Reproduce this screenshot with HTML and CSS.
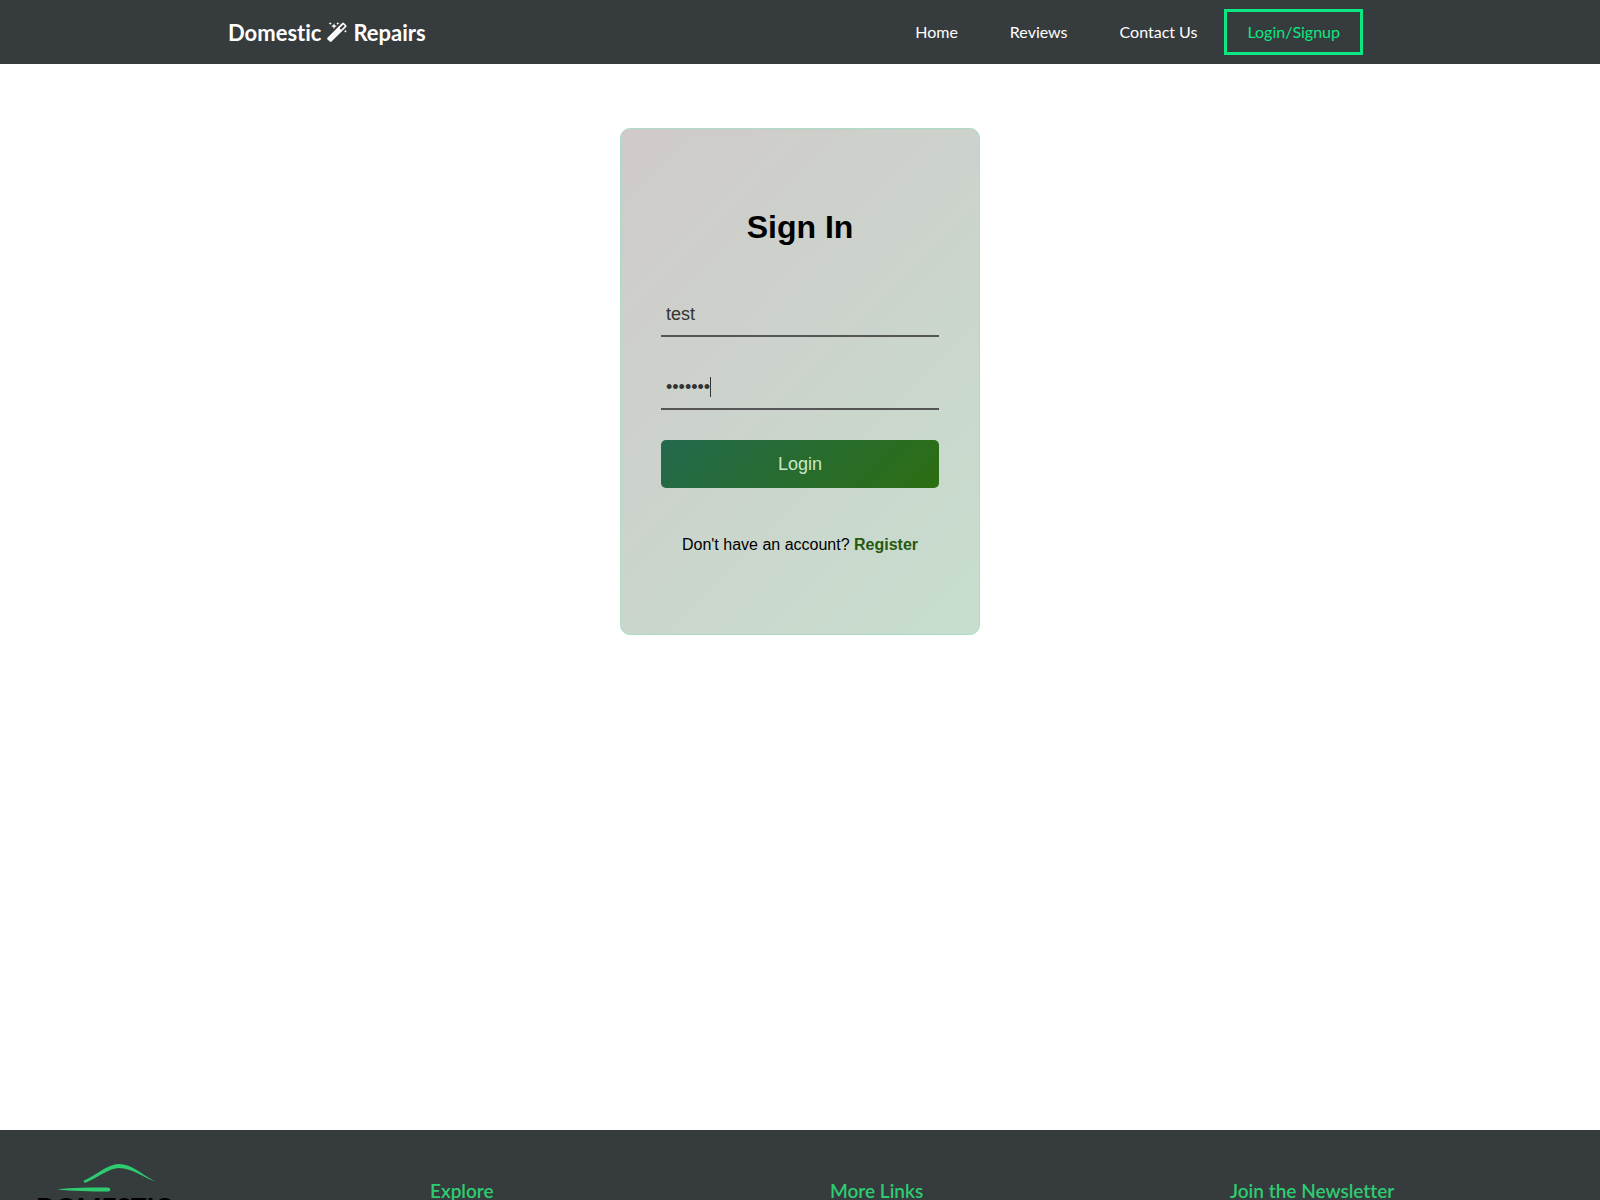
FILE: index.html
```html
<!DOCTYPE html>
<html lang="en">
<head>
<meta charset="utf-8">
<meta name="viewport" content="width=device-width, initial-scale=1">
<title>Domestic Repairs - Sign In</title>
<link rel="stylesheet" href="styles.css">
</head>
<body>
<header class="header">
  <div class="header-inner">
    <a class="brand" href="#">
      <span>Domestic</span>
      <svg class="wand" viewBox="0 0 20 20" aria-hidden="true">
        <path fill="currentColor" fill-rule="evenodd" d="M.5 15.700 15.200 1Q16.100.1 17 1L19.200 3.200Q20 4.100 19.200 5L4.500 19.600Q3.600 20.400 2.800 19.600L.5 17.400Q-.3 16.500.5 15.700ZM12.500 6.200 14.100 7.800 17.800 4 16.300 2.500Z"/>
        <path fill="currentColor" d="m7 1.200.8 2.100 2.100.8-2.100.8L7 7l-.8-2.100-2.100-.8 2.100-.8ZM3.200 0l.5 1 1 .5-1 .5-.5 1-.5-1-1-.5 1-.5ZM10.800 0l.5 1 1 .5-1 .5-.5 1-.5-1-1-.5 1-.5ZM18.400 7.800l.5 1 1 .5-1 .5-.5 1-.5-1-1-.5 1-.5Z"/>
      </svg>
      <span>Repairs</span>
    </a>
    <nav class="nav">
      <a class="nav-link" href="#">Home</a>
      <a class="nav-link" href="#">Reviews</a>
      <a class="nav-link" href="#">Contact Us</a>
      <a class="nav-login" href="#">Login/Signup</a>
    </nav>
  </div>
</header>
<main class="main">
  <form class="card">
    <h1 class="title">Sign In</h1>
    <div class="field">
      <input class="input" type="text" aria-label="Username" value="test">
    </div>
    <div class="field">
      <input class="input" type="password" aria-label="Password" value="test123">
      <span class="caret"></span>
    </div>
    <button class="submit" type="button">Login</button>
    <p class="register">Don't have an account? <a class="register-link" href="#">Register</a></p>
  </form>
</main>
<footer class="footer">
  <div class="footer-logo">
    <svg class="logo" viewBox="0 0 160 80" role="img" aria-label="Domestic Repairs">
      <path fill="#2ecc71" d="M54 16.500C68 10 78 0 89 0 101 0 110 9 125 17.500 113 13 101 4 89 4 79 4 69 13 56 18.500 54 19 53 17.500 54 16.500Z"/>
      <path fill="#2ecc71" d="M27 25.500C42 23.500 61 23.500 78 23.500 81 23.500 81 27.500 78 27.500 61 27.500 42 27 27 25.500Z"/>
      <text class="logo-text" x="6" y="53">DOMESTIC</text>
    </svg>
  </div>
  <div class="footer-col"><h2 class="footer-title">Explore</h2></div>
  <div class="footer-col"><h2 class="footer-title">More Links</h2></div>
  <div class="footer-col"><h2 class="footer-title">Join the Newsletter</h2></div>
</footer>
</body>
</html>
```

FILE: styles.css
```css
* { box-sizing: border-box; }

body {
  margin: 0;
  height: 100vh;
  overflow: hidden;
  background: #fff;
  font-family: "Liberation Sans", Arial, sans-serif;
  font-variant-ligatures: none;
}

a { text-decoration: none; }

.header {
  background: #363b3d;
  font-family: Lato, sans-serif;
}

.header-inner {
  display: flex;
  align-items: center;
  justify-content: space-between;
  max-width: 1200px;
  height: 64px;
  margin: 0 auto;
  padding: 0 37px 0 28px;
}

.brand {
  display: flex;
  align-items: center;
  gap: 6px;
  color: #fff;
  font-size: 22px;
  font-weight: 700;
}

.wand {
  width: 20px;
  height: 20px;
}

.nav {
  display: flex;
  align-items: center;
  font-size: 16px;
  line-height: 40px;
}

.nav-link {
  padding: 0 26px;
  color: #fff;
}

.nav-login {
  margin-left: 1px;
  padding: 0 20px;
  border: 3px solid #0be881;
  color: #0be881;
}

.main {
  min-height: calc(100vh - 134px);
  padding: 64px 16px;
}

.card {
  max-width: 360px;
  margin: 0 auto;
  padding: 80px 40px;
  border: 1px solid #acdcc6;
  border-radius: 10px;
  background: linear-gradient(135deg, #d0caca, #ccd3cc 45%, #c7dece);
}

.title {
  margin: 0 0 48px;
  font-size: 32px;
  line-height: 37px;
  text-align: center;
}

.field {
  position: relative;
  margin-bottom: 30px;
}

.input {
  display: block;
  width: 100%;
  height: 43px;
  padding: 0 5px;
  border: 0;
  border-bottom: 2px solid #555;
  outline: 0;
  background: transparent;
  color: #333;
  font: 18px "Liberation Sans", Arial, sans-serif;
}

.caret {
  position: absolute;
  top: 10px;
  left: 49px;
  width: 1px;
  height: 20px;
  background: #333;
}

.submit {
  display: block;
  width: 100%;
  height: 48px;
  border: 0;
  border-radius: 5px;
  background: linear-gradient(135deg, #23694d, #2c6e12);
  color: #c6e9c6;
  font: 18px "Liberation Sans", Arial, sans-serif;
}

.register {
  margin: 48px 0 0;
  font-size: 16px;
  line-height: 18px;
  text-align: center;
}

.register-link {
  color: #25590f;
  font-weight: bold;
}

.footer {
  display: grid;
  grid-template-columns: repeat(4, 1fr);
  background: #363b3d;
  font-family: Lato, sans-serif;
}

.footer-logo { padding: 34px 30px; }

.logo {
  display: block;
  width: 160px;
  height: 80px;
}

.logo-text {
  font: 900 26px Lato, sans-serif;
}

.footer-col { padding: 47px 30px; }

.footer-title {
  margin: 0;
  color: #2ecc71;
  font-size: 19px;
  font-weight: 600;
  line-height: 28px;
}
```
